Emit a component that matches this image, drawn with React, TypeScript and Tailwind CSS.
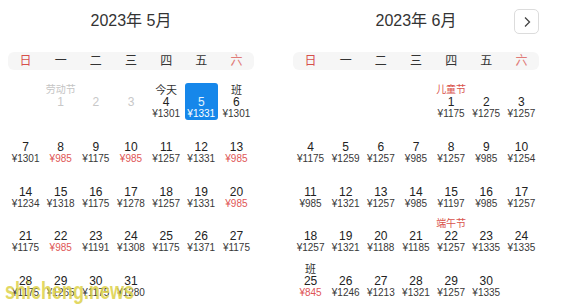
import React from "react";

type Cell = {
  d?: number;
  p?: string;
  red?: boolean;
  label?: string;
  labelType?: "gray" | "red" | "dark";
  past?: boolean;
  selected?: boolean;
} | null;

const may: Cell[] = [
  null,
  { d: 1, label: "劳动节", labelType: "gray", past: true },
  { d: 2, past: true },
  { d: 3, past: true },
  { d: 4, p: "1301", label: "今天", labelType: "dark" },
  { d: 5, p: "1331", selected: true },
  { d: 6, p: "1301", label: "班", labelType: "dark" },
  { d: 7, p: "1301" },
  { d: 8, p: "985", red: true },
  { d: 9, p: "1175" },
  { d: 10, p: "985", red: true },
  { d: 11, p: "1257" },
  { d: 12, p: "1331" },
  { d: 13, p: "985", red: true },
  { d: 14, p: "1234" },
  { d: 15, p: "1318" },
  { d: 16, p: "1175" },
  { d: 17, p: "1278" },
  { d: 18, p: "1257" },
  { d: 19, p: "1331" },
  { d: 20, p: "985", red: true },
  { d: 21, p: "1175" },
  { d: 22, p: "985", red: true },
  { d: 23, p: "1191" },
  { d: 24, p: "1308" },
  { d: 25, p: "1175" },
  { d: 26, p: "1371" },
  { d: 27, p: "1175" },
  { d: 28, p: "1175" },
  { d: 29, p: "1265" },
  { d: 30, p: "1175" },
  { d: 31, p: "1280" },
];

const june: Cell[] = [
  null,
  null,
  null,
  null,
  { d: 1, p: "1175", label: "儿童节", labelType: "red" },
  { d: 2, p: "1275" },
  { d: 3, p: "1257" },
  { d: 4, p: "1175" },
  { d: 5, p: "1259" },
  { d: 6, p: "1257" },
  { d: 7, p: "985" },
  { d: 8, p: "1257" },
  { d: 9, p: "985" },
  { d: 10, p: "1254" },
  { d: 11, p: "985" },
  { d: 12, p: "1321" },
  { d: 13, p: "1257" },
  { d: 14, p: "985" },
  { d: 15, p: "1197" },
  { d: 16, p: "985" },
  { d: 17, p: "1257" },
  { d: 18, p: "1257" },
  { d: 19, p: "1321" },
  { d: 20, p: "1188" },
  { d: 21, p: "1185" },
  { d: 22, p: "1257", label: "端午节", labelType: "red" },
  { d: 23, p: "1335" },
  { d: 24, p: "1335" },
  { d: 25, p: "845", red: true, label: "班", labelType: "dark" },
  { d: 26, p: "1246" },
  { d: 27, p: "1213" },
  { d: 28, p: "1321" },
  { d: 29, p: "1257" },
  { d: 30, p: "1335" },
];

const weekdays = ["日", "一", "二", "三", "四", "五", "六"];

function DayCell({ c }: { c: Cell }) {
  if (!c) return <div className="h-[44.75px]" />;
  if (c.selected) {
    return (
      <div className="h-[44.75px] flex justify-center">
        <div className="-mt-px w-[33px] h-[37px] pt-[13px] rounded-[3px] bg-[#1687ea] flex flex-col items-center">
          <div className="h-[12px] leading-[12px] text-[12px] text-[#e4f3ff]">{c.d}</div>
          <div className="h-[12px] leading-[12px] text-[10px] text-white">¥{c.p}</div>
        </div>
      </div>
    );
  }
  const labelCls =
    c.labelType === "red"
      ? "text-[10px] text-[#d9524c]"
      : c.labelType === "gray"
      ? "text-[10px] text-[#c4c4c4]"
      : "text-[11px] text-[#333]";
  return (
    <div className="h-[44.75px] flex flex-col items-center">
      <div className={`h-[12px] leading-[12px] ${c.label ? labelCls : ""}`}>{c.label ?? ""}</div>
      <div
        className={`h-[12px] leading-[12px] text-[12px] ${
          c.past ? "text-[#c8c8c8]" : "text-[#222]"
        }`}
      >
        {c.d}
      </div>
      {c.p && (
        <div
          className={`h-[12px] leading-[12px] text-[10px] ${
            c.red ? "text-[#e05656]" : "text-[#383838]"
          }`}
        >
          ¥{c.p}
        </div>
      )}
    </div>
  );
}

function Month({ title, cells, nav }: { title: string; cells: Cell[]; nav?: boolean }) {
  return (
    <div className="w-[246px] relative">
      <div className="h-[42px] flex items-center justify-center text-[16px] text-[#333]">
        {title}
      </div>
      {nav && (
        <div className="absolute right-0 top-[9px] w-[25px] h-[25px] rounded-[5px] border border-[#dcdcdc] bg-white flex items-center justify-center">
          <svg width="10" height="12" viewBox="0 0 10 12">
            <polyline points="3,1.5 7.5,6 3,10.5" fill="none" stroke="#444" strokeWidth="1.3" />
          </svg>
        </div>
      )}
      <div className="mt-[10px] h-[18px] rounded-[6px] bg-[#f6f6f6] grid grid-cols-7 items-center text-[12px]">
        {weekdays.map((w, i) => (
          <div
            key={w}
            className={`text-center leading-[18px] ${
              i === 0 ? "text-[#d6504c]" : i === 6 ? "text-[#e07b78]" : "text-[#333]"
            }`}
          >
            {w}
          </div>
        ))}
      </div>
      <div className="mt-[14px] grid grid-cols-7">
        {cells.map((c, i) => (
          <DayCell key={i} c={c} />
        ))}
      </div>
    </div>
  );
}

export default function App() {
  return (
    <div
      className="relative w-[563px] h-[306px] overflow-hidden bg-white"
      style={{ fontFamily: '"Liberation Sans", "Noto Sans CJK SC", sans-serif' }}
    >
      <div className="flex pl-[8px]">
        <Month title="2023年 5月" cells={may} />
        <div className="ml-[39px]">
          <Month title="2023年 6月" cells={june} nav />
        </div>
      </div>
      <div className="absolute left-[5px] top-[279px] origin-left scale-x-[0.75] text-[24px] font-bold leading-none text-[#ddd24a] opacity-85 whitespace-nowrap">
        shicheng.news
      </div>
    </div>
  );
}
